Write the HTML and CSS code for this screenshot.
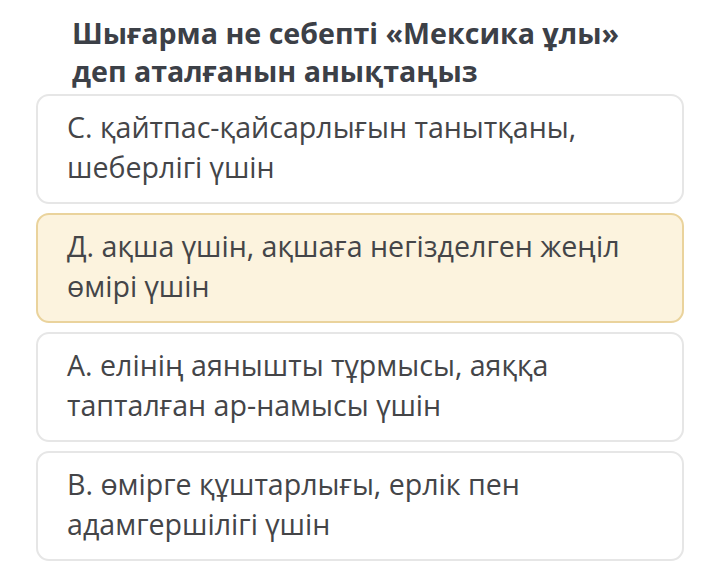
FILE: index.html
```html
<!DOCTYPE html>
<html lang="kk">
<head>
<meta charset="utf-8">
<link rel="stylesheet" href="styles.css">
</head>
<body>
<div class="page">
  <h1 class="question">Шығарма не себепті «Мексика ұлы» деп аталғанын анықтаңыз</h1>
  <div class="options">
    <div class="option">С. қайтпас-қайсарлығын танытқаны, шеберлігі үшін</div>
    <div class="option selected">Д. ақша үшін, ақшаға негізделген жеңіл өмірі үшін</div>
    <div class="option">А. елінің аянышты тұрмысы, аяққа тапталған ар-намысы үшін</div>
    <div class="option">В. өмірге құштарлығы, ерлік пен адамгершілігі үшін</div>
  </div>
</div>
</body>
</html>
```
FILE: styles.css
```css
html, body {
  margin: 0;
  padding: 0;
  background: #ffffff;
}
.page {
  width: 720px;
  height: 576px;
  padding-top: 14px;
  box-sizing: border-box;
  font-family: "Open Sans", "Noto Sans", sans-serif;
}
.question {
  margin: 0 0 4px 72px;
  width: 600px;
  font-size: 28.6px;
  line-height: 38px;
  font-weight: 700;
  color: #3c4047;
}
.options {
  margin-left: 36px;
  width: 648px;
  display: flex;
  flex-direction: column;
  gap: 9px;
}
.option {
  box-sizing: border-box;
  height: 110px;
  padding: 11px 20px 0 29px;
  border: 2px solid #e6e6e6;
  border-radius: 13px;
  background: #ffffff;
  font-size: 28.6px;
  line-height: 40px;
  color: #444548;
}
.option.selected {
  background: #fcf3de;
  border-color: #ead39c;
}
```
